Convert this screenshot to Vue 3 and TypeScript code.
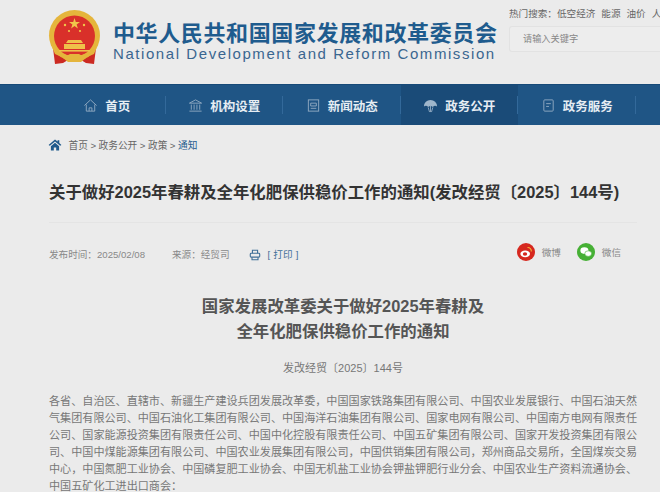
<script setup lang="ts">
const navItems = [
  { label: "首页", icon: "home" },
  { label: "机构设置", icon: "bank" },
  { label: "新闻动态", icon: "news" },
  { label: "政务公开", icon: "tree", active: true },
  { label: "政务服务", icon: "service" },
  { label: "", icon: "service" },
];

const hotWords = ["低空经济", "能源", "油价", "人"];
const crumbs = ["首页", "政务公开", "政策"];

const notice =
  "各省、自治区、直辖市、新疆生产建设兵团发展改革委，中国国家铁路集团有限公司、中国农业发展银行、中国石油天然气集团有限公司、中国石油化工集团有限公司、中国海洋石油集团有限公司、国家电网有限公司、中国南方电网有限责任公司、国家能源投资集团有限责任公司、中国中化控股有限责任公司、中国五矿集团有限公司、国家开发投资集团有限公司、中国中煤能源集团有限公司、中国农业发展集团有限公司，中国供销集团有限公司，郑州商品交易所，全国煤炭交易中心，中国氮肥工业协会、中国磷复肥工业协会、中国无机盐工业协会钾盐钾肥行业分会、中国农业生产资料流通协会、中国五矿化工进出口商会：";
</script>

<template>
  <div class="page">
    <header class="top">
      <svg class="emblem" viewBox="0 0 52 56" width="52" height="56">
        <path d="M5 38 L7 54 L15 53 L20 50 H33 L38 53 L46 54 L48 38 Z" fill="#cc2a22" />
        <circle cx="26.5" cy="25.5" r="25.5" fill="#e5b53c" />
        <circle cx="26.5" cy="26" r="20.5" fill="#d9302a" />
        <path d="M4 37 Q26 55 49 37 L46 44 Q26 54 7 44 Z" fill="#e5b53c" />
        <path d="M15 48 L22 44 H31 L38 48 L33 52 H20 Z" fill="#e5b53c" />
        <path d="M26.5 8 L27.8 12 H32 L28.6 14.4 L29.9 18.4 L26.5 16 L23.1 18.4 L24.4 14.4 L21 12 H25.2 Z" fill="#f0c64a" />
        <circle cx="17" cy="15" r="1.2" fill="#f0c64a" />
        <circle cx="36" cy="15" r="1.2" fill="#f0c64a" />
        <circle cx="21" cy="21" r="1.1" fill="#f0c64a" />
        <circle cx="32" cy="21" r="1.1" fill="#f0c64a" />
        <path d="M20 30 H33 L35 33 H18 Z M16 34 H37 V39 H16 Z" fill="#efc04a" />
        <path d="M11 40 H42 V41.6 H11 Z" fill="#efc04a" />
      </svg>
      <div class="brand">
        <div class="brand-cn">中华人民共和国国家发展和改革委员会</div>
        <div class="brand-en">National Development and Reform Commission</div>
      </div>
      <div class="search">
        <div class="hot">
          <span>热门搜索：</span>
          <span v-for="word in hotWords" :key="word" class="hot-word">{{ word }}</span>
        </div>
        <div class="search-box">请输入关键字</div>
      </div>
    </header>

    <nav class="nav">
      <a
        v-for="item in navItems"
        :key="item.icon + item.label"
        class="nav-item"
        :class="{ active: item.active }"
      >
        <svg class="nav-icon" viewBox="0 0 16 16" width="15" height="15" fill="none" stroke="#8fa9c1" stroke-width="1">
          <template v-if="item.icon === 'home'">
            <path d="M1.5 8 L8 2 L14.5 8" />
            <path d="M3.5 7 V14 H12.5 V7" />
            <path d="M6.5 14 V10.5 H9.5 V14" />
          </template>
          <template v-else-if="item.icon === 'bank'">
            <path d="M1.5 5.5 L8 2 L14.5 5.5 Z" />
            <path d="M3.5 7 V12.5 M6.5 7 V12.5 M9.5 7 V12.5 M12.5 7 V12.5" />
            <path d="M1.5 14 H14.5" />
          </template>
          <template v-else-if="item.icon === 'news'">
            <rect x="2.5" y="2" width="11" height="12" />
            <path d="M5 5.5 H11 V8.5 H5 Z M5 11 H11" />
          </template>
          <template v-else-if="item.icon === 'tree'">
            <path d="M1 9 A7 7 0 0 1 15 9 Q12.5 7.5 10.5 9.5 Q8 7.5 5.5 9.5 Q3.5 7.5 1 9 Z" fill="#9fb6cb" stroke="none" />
            <path d="M8 8 V15 M5.5 10 L7 15 M10.5 10 L9 15" />
          </template>
          <template v-else>
            <rect x="3" y="2" width="10" height="12" rx="1" />
            <path d="M5.5 6 H10.5 M5.5 9 H8.5" />
          </template>
        </svg>
        <span v-if="item.label">{{ item.label }}</span>
      </a>
    </nav>

    <main class="content">
      <div class="crumbs">
        <svg viewBox="0 0 16 14" width="14" height="12" fill="#1f5a8c">
          <path d="M8 0.5 L0.5 7 L2 8 L8 3 L14 8 L15.5 7 L13 4.8 V1.5 H11 V3 Z" />
          <path d="M3.2 8.4 L8 4.4 L12.8 8.4 V13.5 H9.4 V10 H6.6 V13.5 H3.2 Z" />
        </svg>
        <template v-for="crumb in crumbs" :key="crumb">
          <span>{{ crumb }}</span>
          <span class="sep">&gt;</span>
        </template>
        <span class="current">通知</span>
      </div>

      <h1 class="title">关于做好2025年春耕及全年化肥保供稳价工作的通知(发改经贸〔2025〕144号)</h1>

      <div class="meta">
        <span>发布时间：2025/02/08</span>
        <span class="source">来源：经贸司</span>
        <svg class="printer" viewBox="0 0 14 14" width="12" height="12" fill="none" stroke="#3f6f98" stroke-width="1.3">
          <path d="M4 5 V1.5 H10 V5" />
          <rect x="1.5" y="5" width="11" height="4.5" rx="1" />
          <path d="M3.5 9.5 V12.5 H10.5 V9.5" />
        </svg>
        <span class="print">[ 打印 ]</span>
        <div class="share">
          <span class="share-item">
            <svg viewBox="0 0 18 18" width="18" height="18">
              <circle cx="9" cy="9" r="9" fill="#d6281f" />
              <ellipse cx="8.2" cy="10.8" rx="4.8" ry="3.4" fill="#fff" />
              <ellipse cx="8" cy="11" rx="2.2" ry="1.7" fill="#d6281f" />
              <path d="M10.5 4.5 A3.5 3.5 0 0 1 14.3 8.5" fill="none" stroke="#f3b23a" stroke-width="1.1" />
            </svg>
            微博
          </span>
          <span class="share-item">
            <svg viewBox="0 0 18 18" width="18" height="18">
              <circle cx="9" cy="9" r="9" fill="#46b035" />
              <ellipse cx="7.4" cy="7.6" rx="4" ry="3.3" fill="#fff" />
              <ellipse cx="11.2" cy="10.6" rx="3.4" ry="2.8" fill="#fff" stroke="#46b035" stroke-width=".6" />
            </svg>
            微信
          </span>
        </div>
      </div>

      <h2 class="headline">国家发展改革委关于做好2025年春耕及<br />全年化肥保供稳价工作的通知</h2>
      <p class="doc-no">发改经贸〔2025〕144号</p>
      <p class="notice">{{ notice }}</p>
    </main>
  </div>
</template>

<style>
html,
body {
  margin: 0;
  overflow: hidden;
  background: #ebebeb;
}
</style>

<style scoped>
.page {
  width: 660px;
  height: 492px;
  overflow: hidden;
  background: #ebebeb;
  font-family: "Liberation Sans", "Noto Sans CJK SC", sans-serif;
  color: #666;
}

.top {
  height: 84px;
  box-sizing: border-box;
  padding: 10px 0 0 48px;
  display: flex;
  align-items: flex-start;
}

.emblem {
  flex: none;
}

.brand {
  margin: 12px 0 0 13px;
  width: 396px;
  flex: none;
}

.brand-cn {
  font-size: 22px;
  line-height: 24px;
  letter-spacing: 0.62px;
  font-weight: 700;
  color: #1f5c8e;
  white-space: nowrap;
}

.brand-en {
  font-size: 15px;
  line-height: 15px;
  letter-spacing: 1.57px;
  color: #3a6690;
  white-space: nowrap;
}

.search {
  margin-top: -3px;
  width: 152px;
  flex: none;
  overflow: hidden;
}

.hot {
  display: flex;
  font-size: 9.6px;
  line-height: 14px;
  color: #666;
  white-space: nowrap;
}

.hot-word {
  margin-right: 6px;
}

.search-box {
  margin-top: 5px;
  height: 26px;
  box-sizing: border-box;
  border: 1px solid #e2e2e2;
  border-right: 0;
  border-radius: 3px 0 0 3px;
  background: #ededed;
  padding-left: 13px;
  font-size: 9.2px;
  line-height: 25px;
  color: #888;
}

.nav {
  height: 41px;
  box-sizing: border-box;
  border-top: 1px solid #174a78;
  padding-left: 48px;
  background: #1f5585;
  display: flex;
}

.nav-item {
  flex: 0 0 117.5px;
  height: 100%;
  display: flex;
  align-items: center;
  justify-content: center;
  gap: 7px;
  position: relative;
  font-size: 12.5px;
  font-weight: 700;
  color: #e6edf3;
  white-space: nowrap;
}

.nav-item::after {
  content: "";
  position: absolute;
  right: 0;
  top: 11px;
  bottom: 11px;
  width: 1px;
  background: #33699a;
}

.nav-item.active {
  background: #1a4b78;
}

.nav-item:last-child {
  justify-content: flex-start;
  padding-left: 22px;
}

.nav-icon {
  flex: none;
}

.content {
  padding: 0 23px 0 49px;
}

.crumbs {
  margin-top: 12px;
  height: 16px;
  display: flex;
  align-items: center;
  font-size: 9.7px;
  color: #666;
  gap: 2.5px;
}

.crumbs svg {
  margin-right: 4px;
  margin-left: -1px;
}

.current {
  color: #1f5c8e;
}

.title {
  margin: 27px 0 0;
  padding-bottom: 18px;
  border-bottom: 1px solid #e4e4e4;
  font-size: 16.4px;
  line-height: 24px;
  font-weight: 700;
  color: #333;
  white-space: nowrap;
}

.meta {
  margin-top: 19px;
  height: 24px;
  display: flex;
  align-items: center;
  font-size: 9.6px;
  color: #888;
}

.source {
  margin-left: 27px;
}

.printer {
  margin-left: 19px;
  margin-top: 2px;
}

.print {
  margin-left: 7px;
  color: #3f6f98;
  letter-spacing: 0.2px;
}

.share {
  margin-left: auto;
  margin-right: 16px;
  margin-top: -4px;
  display: flex;
  gap: 16px;
}

.share-item {
  display: flex;
  align-items: center;
  gap: 7px;
}

.headline {
  margin: 28px 0 0;
  text-align: center;
  font-size: 16.4px;
  line-height: 25px;
  font-weight: 700;
  color: #555;
}

.doc-no {
  margin: 16px 0 0;
  text-align: center;
  font-size: 11px;
  line-height: 17px;
  color: #777;
}

.notice {
  margin: 16px 0 0;
  font-size: 11.1px;
  line-height: 17px;
  color: #777;
}
</style>
